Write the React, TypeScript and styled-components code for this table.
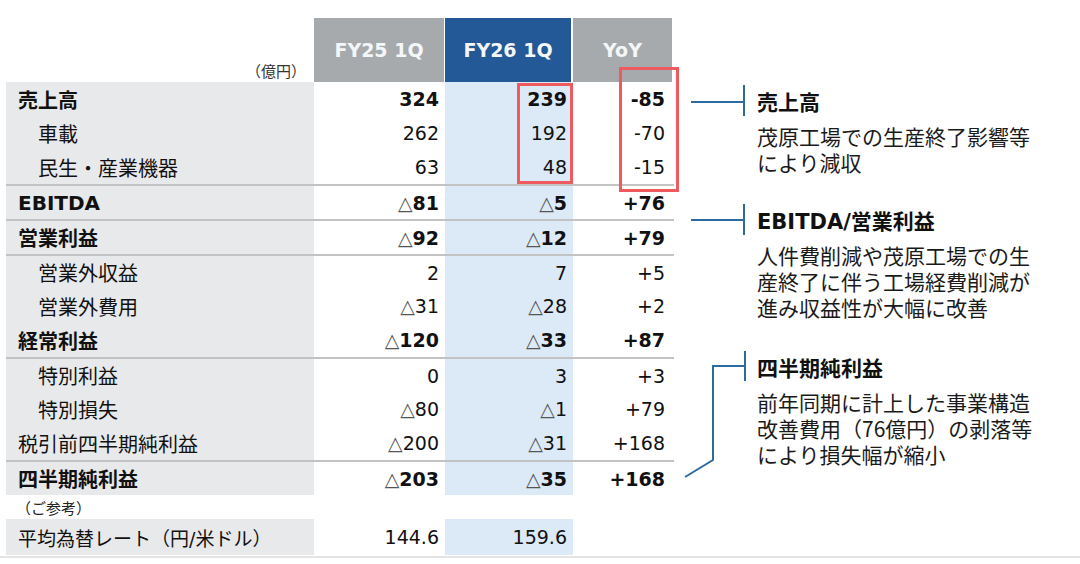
import styled, { createGlobalStyle } from 'styled-components';

const GlobalStyle = createGlobalStyle`
  html, body {
    margin: 0;
    padding: 0;
    background: #fff;
  }
  body {
    font-family: "DejaVu Sans", "Noto Sans CJK JP", sans-serif;
    color: #111;
  }
`;

type Row = {
  label: string;
  a: string;
  b: string;
  c: string;
  bold?: boolean;
  indent?: boolean;
  sep?: boolean;
};

const rows: Row[] = [
  { label: '売上高', a: '324', b: '239', c: '-85', bold: true },
  { label: '車載', a: '262', b: '192', c: '-70', indent: true },
  { label: '民生・産業機器', a: '63', b: '48', c: '-15', indent: true },
  { label: 'EBITDA', a: '△81', b: '△5', c: '+76', bold: true, sep: true },
  { label: '営業利益', a: '△92', b: '△12', c: '+79', bold: true, sep: true },
  { label: '営業外収益', a: '2', b: '7', c: '+5', indent: true, sep: true },
  { label: '営業外費用', a: '△31', b: '△28', c: '+2', indent: true },
  { label: '経常利益', a: '△120', b: '△33', c: '+87', bold: true },
  { label: '特別利益', a: '0', b: '3', c: '+3', indent: true, sep: true },
  { label: '特別損失', a: '△80', b: '△1', c: '+79', indent: true },
  { label: '税引前四半期純利益', a: '△200', b: '△31', c: '+168' },
  { label: '四半期純利益', a: '△203', b: '△35', c: '+168', bold: true, sep: true },
];

// △ stays thin even on bold rows
const Num = ({ v }: { v: string }) =>
  v.startsWith('△') ? (
    <>
      <Tri>△</Tri>
      {v.slice(1)}
    </>
  ) : (
    <>{v}</>
  );

const App = () => {
  return (
    <Page>
      <GlobalStyle />
      <Table>
        <HeadRow>
          <Unit>（億円）</Unit>
          <HeadCell $bg="#a6aaad" $gap={1}>FY25 1Q</HeadCell>
          <HeadCell $bg="#235996" $gap={2}>FY26 1Q</HeadCell>
          <HeadCell $bg="#a6aaad" $gap={2}>YoY</HeadCell>
        </HeadRow>
        {rows.map(r => (
          <BodyRow key={r.label} $sep={r.sep}>
            <Label $bold={r.bold} $indent={r.indent}>{r.label}</Label>
            <Value $bold={r.bold}><Num v={r.a} /></Value>
            <Value $bold={r.bold} $hl><Num v={r.b} /></Value>
            <Value $bold={r.bold} $pad={9}><Num v={r.c} /></Value>
          </BodyRow>
        ))}
        <RefNote>（ご参考）</RefNote>
        <RateRow>
          <Label $size={19}>平均為替レート（円/米ドル）</Label>
          <Value>144.6</Value>
          <Value $hl>159.6</Value>
          <Blank />
        </RateRow>
        <Mark $left={511} $top={83} $w={56} $h={101} />
        <Mark $left={613} $top={67} $w={60} $h={125} />
      </Table>

      <Notes>
        <Note $top={85}>
          <Connector width="62" height="32">
            <line x1="7" y1="17" x2="60" y2="17" />
            <line x1="60" y1="0" x2="60" y2="31" />
          </Connector>
          <NoteText>
            <NoteTitle>売上高</NoteTitle>
            <NoteBody>
              茂原工場での生産終了影響等
              <br />
              により減収
            </NoteBody>
          </NoteText>
        </Note>

        <Note $top={29}>
          <Connector width="62" height="32">
            <line x1="7" y1="16" x2="60" y2="16" />
            <line x1="60" y1="0" x2="60" y2="31" />
          </Connector>
          <NoteText>
            <NoteTitle>EBITDA/営業利益</NoteTitle>
            <NoteBody>
              人件費削減や茂原工場での生
              <br />
              産終了に伴う工場経費削減が
              <br />
              進み収益性が大幅に改善
            </NoteBody>
          </NoteText>
        </Note>

        <Note $top={31}>
          <Connector width="62" height="128">
            <polyline points="61,0 61,30" />
            <polyline points="61,15 29,15 29,109 1,126" />
          </Connector>
          <NoteText>
            <NoteTitle>四半期純利益</NoteTitle>
            <NoteBody>
              前年同期に計上した事業構造
              <br />
              改善費用（76億円）の剥落等
              <br />
              により損失幅が縮小
            </NoteBody>
          </NoteText>
        </Note>
      </Notes>
    </Page>
  );
};

const Page = styled.div`
  width: 1080px;
  height: 556px;
  display: flex;
  align-items: flex-start;
  border-bottom: 2px solid #e4e4e4;
  overflow: hidden;
`;

const Table = styled.div`
  position: relative;
  width: 668px;
  margin-left: 6px;
  padding-top: 18px;
`;

const cols = `grid-template-columns: 308px 131px 128px 101px;`;

const HeadRow = styled.div`
  display: grid;
  ${cols}
  height: 64px;
`;

const Unit = styled.div`
  display: flex;
  align-items: flex-end;
  justify-content: flex-end;
  padding: 0 8px 1px 0;
  font-family: "Noto Sans CJK JP", sans-serif;
  font-size: 15px;
  color: #333;
`;

const HeadCell = styled.div<{ $bg: string; $gap: number }>`
  display: flex;
  align-items: center;
  justify-content: center;
  background: ${p => p.$bg};
  border-right: ${p => p.$gap}px solid #fff;
  color: #f4f6f8;
  font-size: 19px;
  font-weight: bold;
`;

const BodyRow = styled.div<{ $sep?: boolean }>`
  display: grid;
  ${cols}
  height: ${p => (p.$sep ? 33 : 34)}px;
  border-top: ${p => (p.$sep ? '2px solid #c3c3c3' : 'none')};
`;

const Label = styled.div<{ $bold?: boolean; $indent?: boolean; $size?: number }>`
  display: flex;
  align-items: center;
  background: #e8e9eb;
  padding-left: ${p => (p.$indent ? 32 : 12)}px;
  font-size: ${p => p.$size ?? 20}px;
  font-weight: ${p => (p.$bold ? 'bold' : 'normal')};
  color: #111;
  white-space: nowrap;
`;

const Value = styled.div<{ $bold?: boolean; $hl?: boolean; $pad?: number }>`
  display: flex;
  align-items: center;
  justify-content: flex-end;
  padding-right: ${p => p.$pad ?? 6}px;
  background: ${p => (p.$hl ? '#dce9f7' : 'transparent')};
  font-size: 19px;
  font-weight: ${p => (p.$bold ? 'bold' : 'normal')};
  color: #111;
`;

const Tri = styled.span`
  font-weight: normal;
  color: #555;
`;

const RefNote = styled.div`
  height: 24px;
  display: flex;
  align-items: flex-end;
  padding: 0 0 1px 10px;
  box-sizing: border-box;
  font-family: "Noto Sans CJK JP", sans-serif;
  font-size: 15px;
  color: #222;
`;

const RateRow = styled.div`
  display: grid;
  ${cols}
  height: 36px;
`;

const Blank = styled.div``;

const Mark = styled.div<{ $left: number; $top: number; $w: number; $h: number }>`
  position: absolute;
  left: ${p => p.$left}px;
  top: ${p => p.$top}px;
  width: ${p => p.$w}px;
  height: ${p => p.$h}px;
  box-sizing: border-box;
  border: 3px solid #ef5a5e;
`;

const Notes = styled.div`
  display: flex;
  flex-direction: column;
  margin-left: 10px;
`;

const Note = styled.div<{ $top: number }>`
  display: flex;
  gap: 11px;
  margin-top: ${p => p.$top}px;
`;

const Connector = styled.svg`
  flex-shrink: 0;
  overflow: visible;
  stroke: #2d6a9f;
  stroke-width: 2;
  fill: none;
`;

const NoteText = styled.div`
  display: flex;
  flex-direction: column;
  color: #1a1a1a;
`;

const NoteTitle = styled.div`
  padding-top: 4px;
  line-height: 28px;
  font-size: 21px;
  font-weight: bold;
  color: #111;
  white-space: nowrap;
`;

const NoteBody = styled.div`
  margin-top: 6px;
  line-height: 26px;
  font-family: "Noto Sans CJK JP", sans-serif;
  font-size: 21px;
  white-space: nowrap;
`;

export default App;
